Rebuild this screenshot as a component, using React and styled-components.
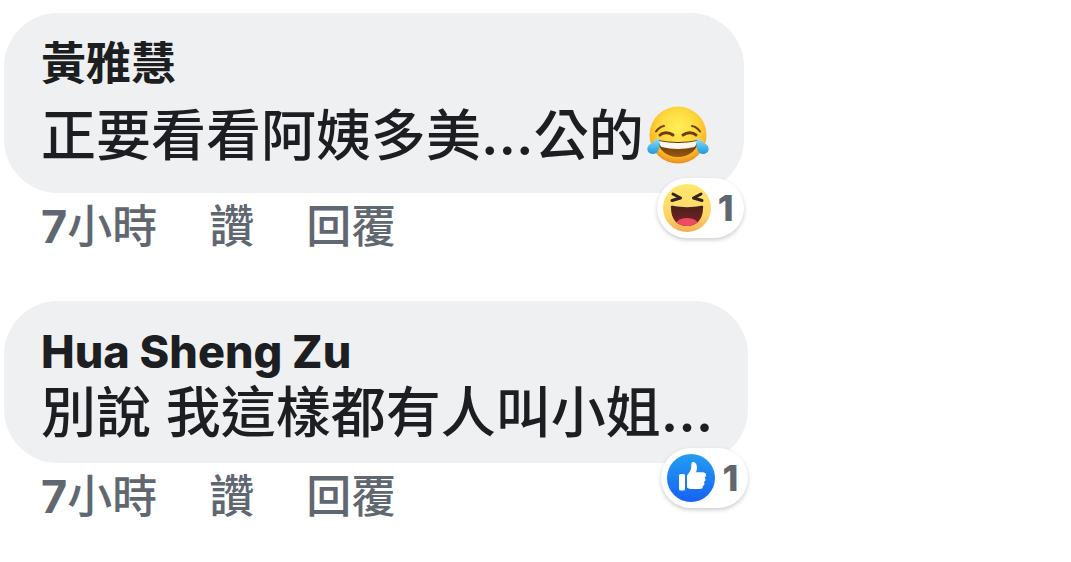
import React from 'react'
import styled, { createGlobalStyle } from 'styled-components'

const comments = [
    { id: 1, author: '黃雅慧', latin: false, text: ['正要看看阿姨多美', '...', '公的'], emoji: true, reaction: 'haha' },
    { id: 2, author: 'Hua Sheng Zu', latin: true, text: ['別說 我這樣都有人叫小姐', '...', ''], emoji: false, reaction: 'like' },
]

function App() {
    return (
        <>
            <GlobalStyle />
            <CommentList>
                {comments.map(comment => (
                    <Comment key={comment.id}>
                        <Bubble>
                            <Author $latin={comment.latin}>{comment.author}</Author>
                            <Message $tall={comment.emoji}>
                                <span>
                                    {comment.text[0]}<Dots>{comment.text[1]}</Dots>{comment.text[2]}
                                </span>
                                {comment.emoji && <JoyIcon />}
                            </Message>
                            <Reaction type="button">
                                {comment.reaction === 'haha' ? <HahaIcon /> : <LikeIcon />}
                                <span>1</span>
                            </Reaction>
                        </Bubble>
                        <Actions>
                            <time><b>7</b>小時</time>
                            <Action type="button">讚</Action>
                            <Action type="button">回覆</Action>
                        </Actions>
                    </Comment>
                ))}
            </CommentList>
        </>
    )
}

export default App

function JoyIcon() {
    return (
        <Joy viewBox="0 0 62 58" aria-hidden="true">
            <defs>
                <radialGradient id="joyFace" cx="0.5" cy="0.36" r="0.65">
                    <stop offset="0" stopColor="#fff05a" />
                    <stop offset="0.5" stopColor="#fed83b" />
                    <stop offset="0.8" stopColor="#fbb829" />
                    <stop offset="1" stopColor="#e8891b" />
                </radialGradient>
                <linearGradient id="joyMouth" x1="0" y1="0" x2="0" y2="1">
                    <stop offset="0" stopColor="#5c2a05" />
                    <stop offset="1" stopColor="#9a5a10" />
                </linearGradient>
                <linearGradient id="joyTear" x1="0" y1="0" x2="0" y2="1">
                    <stop offset="0" stopColor="#a5e6fb" />
                    <stop offset="0.5" stopColor="#55bff0" />
                    <stop offset="1" stopColor="#2497dc" />
                </linearGradient>
            </defs>
            <circle cx="31" cy="29" r="28.5" fill="url(#joyFace)" />
            <g fill="none" stroke="#6f3c08" strokeLinecap="round">
                <path d="M9 25.500C11 22.500 14 20.500 17 20" strokeWidth="2" />
                <path d="M53 25.500C51 22.500 48 20.500 45 20" strokeWidth="2" />
                <path d="M13 29C16 26 22 26 26 29" strokeWidth="3" />
                <path d="M49 29C46 26 40 26 36 29" strokeWidth="3" />
            </g>
            <path d="M11 34C23 36.500 39 36.500 51 34C51 44 42 51 31 51S11 44 11 34Z" fill="url(#joyMouth)" />
            <path d="M12 35C24 37.500 38 37.500 50 35C50 37.500 49 39.500 47.500 41C37 43.500 25 43.500 14.500 41C13 39.500 12 37.500 12 35Z" fill="#fff8ee" />
            <path d="M11.500 31C13.500 38 13 48 6 48C0 48 -1 42 2 39C5 36.500 9 35 11.500 31Z" fill="url(#joyTear)" />
            <path d="M50.500 31C48.500 38 49 48 56 48C62 48 63 42 60 39C57 36.500 53 35 50.500 31Z" fill="url(#joyTear)" />
        </Joy>
    )
}

function HahaIcon() {
    return (
        <Badge viewBox="0 0 48 48" aria-hidden="true">
            <defs>
                <linearGradient id="hahaFace" x1="0" y1="0" x2="0" y2="1">
                    <stop offset="0" stopColor="#ffe86c" />
                    <stop offset="0.65" stopColor="#fdd667" />
                    <stop offset="1" stopColor="#f4ad52" />
                </linearGradient>
                <linearGradient id="hahaMouth" x1="0" y1="0" x2="0" y2="1">
                    <stop offset="0" stopColor="#4a2018" />
                    <stop offset="1" stopColor="#7b222b" />
                </linearGradient>
                <clipPath id="hahaClip">
                    <path d="M8 24C7 21.500 9 21.500 11 22C19 23.500 29 23.500 37 22C39 21.500 41 21.500 40 24C40 35 34 42 24 42S8 35 8 24Z" />
                </clipPath>
            </defs>
            <circle cx="24" cy="24" r="24" fill="url(#hahaFace)" />
            <path d="M8 24C7 21.500 9 21.500 11 22C19 23.500 29 23.500 37 22C39 21.500 41 21.500 40 24C40 35 34 42 24 42S8 35 8 24Z" fill="url(#hahaMouth)" />
            <ellipse cx="24" cy="40" rx="11" ry="6" fill="#ee4a62" clipPath="url(#hahaClip)" />
            <g fill="none" stroke="#302420" strokeWidth="3" strokeLinecap="round" strokeLinejoin="round">
                <path d="M10 10L17.500 14L9 16.500" />
                <path d="M38 10L30.500 14L39 16.500" />
            </g>
        </Badge>
    )
}

function LikeIcon() {
    return (
        <Badge viewBox="0 0 48 48" aria-hidden="true">
            <defs>
                <linearGradient id="likeFill" x1="0" y1="0" x2="0" y2="1">
                    <stop offset="0" stopColor="#249df2" />
                    <stop offset="1" stopColor="#1662f3" />
                </linearGradient>
            </defs>
            <circle cx="24" cy="24" r="24" fill="url(#likeFill)" />
            <rect x="12" y="20" width="6" height="16.500" rx="1.500" fill="#fff" />
            <path
                d="M20 21.500C22 19 24.300 16.500 24.300 12.500C24.300 8.500 25 8 26.300 8C28.500 8 30 10.500 30 13.500C30 15.500 29.400 17 29 18.200H35.500C37.600 18.200 39 19.300 39 21C39 22.200 38.500 23 37.600 23.500C38.400 24.200 38.600 25 38.400 26C38.200 27 37.600 27.700 36.800 28C37.400 28.700 37.600 29.500 37.400 30.300C37.200 31.200 36.600 31.800 35.800 32C36.200 33.800 35 35 32.800 35H26C23 35 21.400 34.500 20 33.500Z"
                fill="#fff"
            />
        </Badge>
    )
}

const GlobalStyle = createGlobalStyle`
    body{
        margin: 0;
        background: #fff;
        color: #1c1e21;
        font-family: Inter, "Noto Sans CJK TC", sans-serif;
    }
`

const CommentList = styled.main`
    display: flex;
    flex-direction: column;
    gap: 40px;
    padding: 13px 4px 0;
`

const Comment = styled.article`
    display: flex;
    flex-direction: column;
    align-items: flex-start;
`

const Bubble = styled.div`
    position: relative;
    box-sizing: border-box;
    padding: 21px 35px 21px 37px;
    border-radius: 54px;
    background: #eff0f2;
`

const Author = styled.h3`
    margin: 0;
    font-size: 45px;
    font-weight: ${props => props.$latin ? 800 : 700};
    line-height: 60px;
`

const Message = styled.p`
    display: flex;
    align-items: center;
    gap: 3px;
    margin: 0;
    padding-top: ${props => props.$tall ? '4px' : '0'};
    font-size: 55px;
    font-weight: 500;
    line-height: ${props => props.$tall ? '74px' : '60px'};
    white-space: nowrap;
`

const Dots = styled.span`
    font-weight: 600;
`

const Joy = styled.svg`
    width: 62px;
    height: 58px;
    flex-shrink: 0;
`

const Badge = styled.svg`
    width: 48px;
    height: 48px;
    flex-shrink: 0;
`

const Reaction = styled.button`
    position: absolute;
    right: 0;
    bottom: -45px;
    display: flex;
    align-items: center;
    gap: 7px;
    height: 60px;
    padding: 0 10px 0 6px;
    border: 0;
    border-radius: 30px;
    background: #fff;
    box-shadow: 0 2px 4px rgba(0,0,0,.2);
    color: #606770;
    font-family: inherit;
    font-size: 36px;
    font-weight: 800;
    cursor: pointer;
`

const Actions = styled.div`
    display: flex;
    gap: 52px;
    padding-left: 37px;
    color: #606770;
    font-size: 45px;
    font-weight: 500;
    line-height: 68px;
`

const Action = styled.button`
    padding: 0;
    border: 0;
    background: none;
    color: inherit;
    font: inherit;
    cursor: pointer;
`
